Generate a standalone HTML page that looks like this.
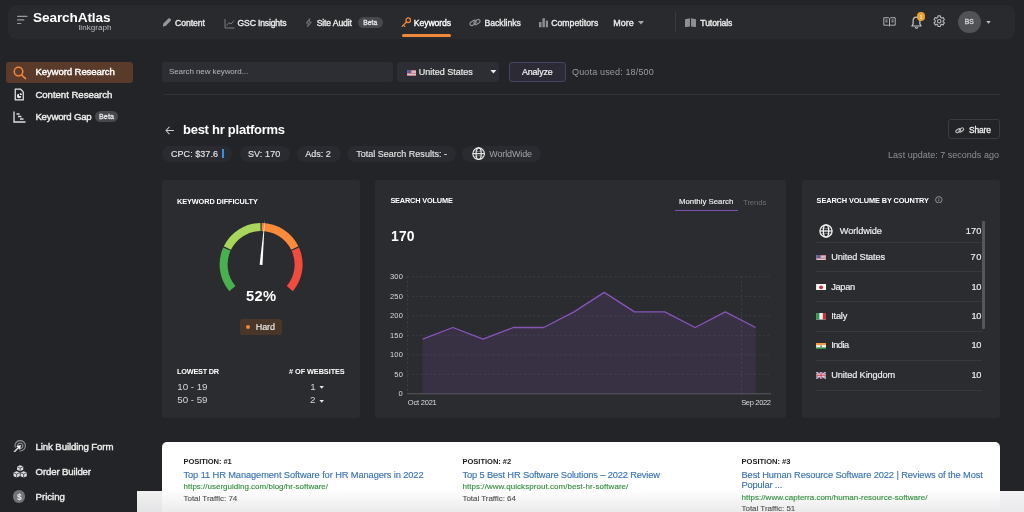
<!DOCTYPE html>
<html><head><meta charset="utf-8">
<style>
*{box-sizing:border-box;margin:0;padding:0}
html,body{width:1024px;height:512px;overflow:hidden;background:#232427;font-family:"Liberation Sans",sans-serif;color:#fff}
.abs{position:absolute}
.t{position:absolute;white-space:nowrap;line-height:1}
.chip{position:absolute;top:145.5px;height:16px;background:#2a2b30;border-radius:8px}
.card{position:absolute;top:180px;height:237.5px;background:#2b2c30;border-radius:3px}
</style></head><body>
<div class="abs" style="left:8px;top:5px;width:1007px;height:33.5px;background:#292a2e;border-radius:8px"></div>

<!-- hamburger -->
<svg class="abs" style="left:17px;top:15px" width="11" height="10" viewBox="0 0 11 10"><g stroke="#9a9b9f" stroke-width="1.2" stroke-linecap="round"><path d="M0.6 1.3h9.4M0.6 4.9h6.2M0.6 8.5h3.2"/></g></svg>

<!-- nav icons -->
<svg class="abs" style="left:161.6px;top:17.3px" width="9.6" height="10.8" viewBox="0 0 11 11"><path d="M.8 10.3l.8-3.4L7.4 1a1.2 1.2 0 0 1 1.7 0l.9.9a1.2 1.2 0 0 1 0 1.7L4.2 9.5z" fill="#97989c"/></svg>
<svg class="abs" style="left:223.5px;top:17.5px" width="11" height="11" viewBox="0 0 11 11"><path d="M1 1v9h9.5" stroke="#7c7d81" fill="none" stroke-width="1"/><path d="M2.5 7.5l2.5-3 2 1.5 3-3.5" stroke="#7c7d81" fill="none" stroke-width="1"/></svg>
<svg class="abs" style="left:304.8px;top:18px" width="7.6" height="9.3" viewBox="0 0 9 11"><path d="M5.5 .8L1.5 6h2.6L3.2 10.2 7.5 4.8H4.8z" stroke="#808185" fill="none" stroke-width="1.1" stroke-linejoin="round"/></svg>
<div class="abs" style="left:358px;top:17px;width:25px;height:11px;border-radius:6px;background:#47484d"></div>
<svg class="abs" style="left:400.5px;top:17px" width="10.5" height="10.5" viewBox="0 0 11 11"><circle cx="7.6" cy="3.4" r="2.4" stroke="#f0883a" fill="none" stroke-width="1.4"/><path d="M5.8 5.2L1.2 9.8M2.6 8.4l1.4 1.4" stroke="#f0883a" fill="none" stroke-width="1.4" stroke-linecap="round"/></svg>
<div class="abs" style="left:402px;top:34.4px;width:49px;height:2.8px;background:#f0883a;border-radius:1.5px"></div>
<svg class="abs" style="left:469px;top:17px" width="12" height="11" viewBox="0 0 12 11"><g stroke="#8e8f93" fill="none" stroke-width="1.2"><rect x="0.8" y="4.2" width="6.5" height="3.6" rx="1.8" transform="rotate(-35 4 6)"/><rect x="4.7" y="3.2" width="6.5" height="3.6" rx="1.8" transform="rotate(-35 8 5)"/></g></svg>
<svg class="abs" style="left:538.5px;top:17px" width="9.5" height="11" viewBox="0 0 10 11"><g fill="#8e8f93"><rect x="0" y="5" width="2.6" height="5.5"/><rect x="3.6" y="1" width="2.6" height="9.5"/><rect x="7.2" y="3.5" width="2.6" height="7"/></g></svg>
<svg class="abs" style="left:638px;top:21px" width="6" height="4" viewBox="0 0 6 4"><path d="M0 0h6L3 3.5z" fill="#a5a6aa"/></svg>
<div class="abs" style="left:675px;top:12px;width:1px;height:20px;background:#3a3b40"></div>
<svg class="abs" style="left:684.8px;top:17.5px" width="11" height="9.5" viewBox="0 0 12 10"><path d="M0 1.2L5.4 .2v9L0 9.8zM6.6 .2L12 1.2v8.6L6.6 9.2z" fill="#8e8f93"/></svg>

<!-- right icons -->
<svg class="abs" style="left:882.6px;top:16.8px" width="13" height="9.8" viewBox="0 0 14 11"><g stroke="#b2b3b7" fill="none" stroke-width="1.1"><path d="M.6 .8h5.2l1.2.9 1.2-.9h5.2v8.4H8.2l-1.2.9-1.2-.9H.6z"/><path d="M7 1.7v8.4M2.4 3.4h2.4M2.4 5.4h2.4M9.2 3.4h2.4M9.2 5.4h2.4"/></g></svg>
<svg class="abs" style="left:910.5px;top:16px" width="11" height="13" viewBox="0 0 11 13"><path d="M5.5 1.2c-2.2 0-3.4 1.7-3.4 3.8v3L.9 10h9.2L8.9 8V5c0-2.1-1.2-3.8-3.4-3.8zM4.2 11.3a1.4 1.4 0 0 0 2.6 0" stroke="#c6c7ca" fill="none" stroke-width="1.2" stroke-linejoin="round"/></svg>
<div class="abs" style="left:916.8px;top:12.3px;width:8.6px;height:8.6px;border-radius:5px;background:#f0a030"></div>
<svg class="abs" style="left:932.4px;top:14.3px" width="14.4" height="14.4" viewBox="0 0 24 24"><path d="M19.4 13a7.6 7.6 0 0 0 0-2l2.1-1.6-2-3.5-2.5 1a7.6 7.6 0 0 0-1.7-1L14.9 3.2h-4L10.5 5.9a7.6 7.6 0 0 0-1.7 1l-2.5-1-2 3.5L6.4 11a7.6 7.6 0 0 0 0 2l-2.1 1.6 2 3.5 2.5-1a7.6 7.6 0 0 0 1.7 1l.4 2.7h4l.4-2.7a7.6 7.6 0 0 0 1.7-1l2.5 1 2-3.5z" transform="translate(-0.9 0)" stroke="#b4b5b9" fill="none" stroke-width="1.9" stroke-linejoin="round"/><circle cx="12" cy="12" r="2.9" stroke="#b4b5b9" fill="none" stroke-width="1.9"/></svg>
<div class="abs" style="left:958px;top:10.6px;width:22.6px;height:22.6px;border-radius:12px;background:#505256"></div>
<svg class="abs" style="left:985.6px;top:20.5px" width="5" height="3" viewBox="0 0 6 4"><path d="M0 0h6L3 3.5z" fill="#c0c0c0"/></svg>

<!-- sidebar -->
<div class="abs" style="left:6px;top:62px;width:127px;height:21.4px;background:#5a3b2b;border-radius:3px"></div>
<svg class="abs" style="left:12.5px;top:66px" width="14" height="14" viewBox="0 0 14 14"><circle cx="5.5" cy="5.6" r="4.3" stroke="#f0883a" fill="none" stroke-width="1.5"/><path d="M8.7 9l3.8 3.6" stroke="#f0883a" stroke-width="1.5" stroke-linecap="round"/></svg>
<svg class="abs" style="left:14.3px;top:88px" width="10.5" height="13" viewBox="0 0 11 13"><path d="M1.3 .8h5.4L9.7 3.8v8.4H1.3z" stroke="#e6e6e8" fill="none" stroke-width="1.3" stroke-linejoin="round"/><path d="M5.3 5.7a2.3 2.3 0 1 0 2.3 2.3H5.3z" fill="#e6e6e8"/><path d="M6.2 4.9v2.2h2.2a2.2 2.2 0 0 0-2.2-2.2z" fill="#e6e6e8"/></svg>
<svg class="abs" style="left:12.8px;top:110.5px" width="13" height="12" viewBox="0 0 13 12"><path d="M1 .6v10.4h11.5" stroke="#e0e0e0" fill="none" stroke-width="1.3"/><path d="M3.5 3h3M5 5.5h3.5M7 8h3.5" stroke="#e0e0e0" stroke-width="1.3"/></svg>
<div class="abs" style="left:95px;top:110.6px;width:23px;height:11.4px;border-radius:6px;background:#47484d"></div>

<svg class="abs" style="left:12.8px;top:440.4px" width="13" height="13" viewBox="0 0 13 13"><g stroke="#8f9094" fill="none" stroke-width="1.15" stroke-linecap="round"><path d="M2.2 7.2A5.2 5.2 0 1 1 7 11"/><path d="M4.6 6.5A2.7 2.7 0 1 1 7.2 8.5"/></g><path d="M7.7 5.3L3.7 6.3 4.9 7.5 1 11.4 1.7 12.1 5.6 8.2 6.8 9.4z" fill="#f2f2f2" stroke="#f2f2f2" stroke-width=".5" stroke-linejoin="round"/></svg>
<svg class="abs" style="left:13px;top:464.6px" width="14.3" height="13" viewBox="0 0 14 13"><g fill="#dedee1"><path d="M7 .2l3.1 1.4v3.2L7 6.2 3.9 4.8V1.6z"/><path d="M3.5 6.2l3.1 1.4v3.6l-3.1 1.4-3.1-1.4V7.6z"/><path d="M10.5 6.2l3.1 1.4v3.6l-3.1 1.4-3.1-1.4V7.6z"/></g><g stroke="#232427" stroke-width=".7" fill="none"><path d="M4 1.7l3 1.4 3-1.4M7 3.1v3M.5 7.7l3 1.4 3-1.4M3.5 9.1v3.4M7.5 7.7l3 1.4 3-1.4M10.5 9.1v3.4"/></g></svg>
<div class="abs" style="left:13.3px;top:490.4px;width:12.2px;height:12.2px;border-radius:7px;background:#737478"></div>

<!-- search row -->
<div class="abs" style="left:162.2px;top:62px;width:230.5px;height:19.6px;background:#2d2e33;border-radius:3px"></div>
<div class="abs" style="left:397px;top:62px;width:101.6px;height:19.6px;background:#2d2e33;border-radius:3px"></div>
<svg class="abs" style="left:406.5px;top:70px" width="9.6" height="5.6" viewBox="0 0 10 6"><rect width="10" height="6" fill="#e4e0e6"/><g fill="#cf6f80"><rect y="0" width="10" height=".9"/><rect y="1.7" width="10" height=".9"/><rect y="3.4" width="10" height=".9"/><rect y="5.1" width="10" height=".9"/></g><rect width="4.5" height="3.3" fill="#5a5f96"/></svg>
<svg class="abs" style="left:490px;top:70px" width="6.8" height="4" viewBox="0 0 6 4"><path d="M0 0h6L3 3.6z" fill="#ececec"/></svg>
<div class="abs" style="left:508.8px;top:62px;width:57.4px;height:19.6px;background:#2b2a35;border:1px solid #4a4169;border-radius:3px"></div>
<div class="abs" style="left:163px;top:94px;width:837px;height:1px;background:#313237"></div>

<!-- title row -->
<svg class="abs" style="left:165px;top:125.5px" width="9.5" height="9" viewBox="0 0 10 9"><path d="M9 4.5H1.2M4.4 1L1 4.5 4.4 8" stroke="#c8c8c8" fill="none" stroke-width="1.1" stroke-linecap="round" stroke-linejoin="round"/></svg>
<div class="abs" style="left:947.5px;top:119px;width:52px;height:19.6px;border:1px solid #3a3b40;border-radius:3px"></div>
<svg class="abs" style="left:955px;top:125.5px" width="9.5" height="8.7" viewBox="0 0 12 11"><g stroke="#c0c0c0" fill="none" stroke-width="1.3"><rect x="0.8" y="4.2" width="6.5" height="3.6" rx="1.8" transform="rotate(-35 4 6)"/><rect x="4.7" y="3.2" width="6.5" height="3.6" rx="1.8" transform="rotate(-35 8 5)"/></g></svg>

<div class="chip" style="left:162px;width:70px"></div>
<div class="abs" style="left:221.5px;top:149px;width:2px;height:9px;background:#3b8fe0"></div>
<div class="chip" style="left:239.5px;width:50.5px"></div>
<div class="chip" style="left:296.5px;width:44px"></div>
<div class="chip" style="left:347px;width:108.5px"></div>
<div class="chip" style="left:461.8px;width:79px"></div>
<svg class="abs" style="left:471.7px;top:147px" width="13.3" height="13.3" viewBox="0 0 14 14"><g stroke="#ececec" fill="none" stroke-width="1.2"><circle cx="7" cy="7" r="6.1"/><ellipse cx="7" cy="7" rx="2.7" ry="6.1"/><path d="M.9 7h12.2"/><path d="M2 3.9q5 1.800 10 0M2 10.1q5-1.800 10 0" stroke-width=".7" opacity=".6"/></g></svg>

<!-- card 1 -->
<div class="card" style="left:161.7px;width:198.6px"></div>
<svg class="abs" style="left:211px;top:214px" width="100" height="90" viewBox="211 214 100 90">
<g fill="none" stroke-width="8"><path d="M232.37 288.60A37.5 37.5 0 0 1 226.87 249.19" stroke="#48b04e"/><path d="M227.37 248.12A37.5 37.5 0 0 1 260.51 227.00" stroke="#a8d65c"/><path d="M261.69 227.00A37.5 37.5 0 0 1 294.83 248.12" stroke="#fb8b3a"/><path d="M295.33 249.19A37.5 37.5 0 0 1 289.83 288.60" stroke="#ef4b3f"/></g>
<path d="M259.6 264.8L264.8 219.3 262.5 265z" fill="#fff"/>
</svg>
<div class="abs" style="left:240.4px;top:318.8px;width:42px;height:16.2px;background:#4a3629;border-radius:3px"></div>
<div class="abs" style="left:246.3px;top:325px;width:3.8px;height:3.8px;border-radius:2px;background:#f0883a"></div>
<svg class="abs" style="left:319.2px;top:386px" width="5.4" height="3" viewBox="0 0 6 4"><path d="M0 0h6L3 3.6z" fill="#e8e8e8"/></svg>
<svg class="abs" style="left:319.2px;top:399.5px" width="5.4" height="3" viewBox="0 0 6 4"><path d="M0 0h6L3 3.6z" fill="#e8e8e8"/></svg>

<!-- card 2 -->
<div class="card" style="left:374.7px;width:411.5px"></div>
<div class="abs" style="left:674.5px;top:209.6px;width:63.7px;height:1.4px;background:#7f4fad"></div>
<svg class="abs" style="left:380px;top:268px" width="400" height="145" viewBox="380 268 400 145">
<g stroke="#404146" stroke-width="0.7" stroke-dasharray="2.5 2">
<path d="M407 276.8H771M407 296.3H771M407 315.8H771M407 335.3H771M407 354.8H771M407 374.3H771"/>
<path d="M407.5 276V393M741.5 276V398"/>
</g>
<path d="M407 393.8H771" stroke="#5a5b60" stroke-width="1"/>
<path d="M422.6 339.2L452.9 327.5L483.1 339.2L513.4 327.5L543.7 327.5L574.0 311.9L604.2 292.4L634.5 311.9L664.8 311.9L695.1 327.5L725.3 311.9L755.6 327.5L755.6 393.8L422.6 393.8z" fill="rgba(127,79,173,0.170)"/>
<path d="M422.6 339.2L452.9 327.5L483.1 339.2L513.4 327.5L543.7 327.5L574.0 311.9L604.2 292.4L634.5 311.9L664.8 311.9L695.1 327.5L725.3 311.9L755.6 327.5" fill="none" stroke="#8755ba" stroke-width="1.3" stroke-linejoin="round"/>
</svg>

<!-- card 3 -->
<div class="card" style="left:801.7px;width:198.3px"></div>
<svg class="abs" style="left:935.4px;top:195.6px" width="7.6" height="7.6" viewBox="0 0 8 8"><circle cx="4" cy="4" r="3.4" stroke="#b0b0b0" fill="none" stroke-width=".8"/><path d="M4 3.6v2.2M4 2.2v.8" stroke="#b0b0b0" stroke-width=".8"/></svg>
<svg class="abs" style="left:818.5px;top:224.2px" width="14" height="14" viewBox="0 0 14 14"><g stroke="#f4f4f4" fill="none" stroke-width="1.25"><circle cx="7" cy="7" r="6.1"/><ellipse cx="7" cy="7" rx="2.7" ry="6.1"/><path d="M.9 7h12.2"/><path d="M2 3.9q5 1.800 10 0M2 10.1q5-1.800 10 0" stroke-width=".7" opacity=".6"/></g></svg>
<svg class="abs" style="left:816px;top:254.75px" width="10.2" height="5.7" viewBox="0 0 10 6"><rect width="10" height="6" fill="#e4e0e6"/><g fill="#cf6f80"><rect y="0" width="10" height=".9"/><rect y="1.7" width="10" height=".9"/><rect y="3.4" width="10" height=".9"/><rect y="5.1" width="10" height=".9"/></g><rect width="4.5" height="3.3" fill="#5a5f96"/></svg>
<svg class="abs" style="left:816px;top:283.9px" width="10.2" height="6.6" viewBox="0 0 10 6.6"><rect width="10" height="6.6" fill="#f6f6f6"/><circle cx="5" cy="3.3" r="1.9" fill="#c8283c"/></svg>
<svg class="abs" style="left:816px;top:313.3px" width="10.2" height="6.6" viewBox="0 0 10 6.6"><rect width="10" height="6.6" fill="#f4f4f4"/><rect width="3.3" height="6.6" fill="#2f9a50"/><rect x="6.7" width="3.3" height="6.6" fill="#d0303c"/></svg>
<svg class="abs" style="left:816px;top:342.7px" width="10.2" height="6.6" viewBox="0 0 10 6.6"><rect width="10" height="6.6" fill="#f4f4f4"/><rect width="10" height="2.2" fill="#f09a3a"/><rect y="4.4" width="10" height="2.2" fill="#2f8a3a"/><circle cx="5" cy="3.3" r=".8" fill="#33408a"/></svg>
<svg class="abs" style="left:816px;top:372.3px" width="10.2" height="6.6" viewBox="0 0 10 6.6"><rect width="10" height="6.6" fill="#3a4a8a"/><path d="M0 0L10 6.6M10 0L0 6.6" stroke="#f0f0f0" stroke-width="1.3"/><path d="M0 0L10 6.6M10 0L0 6.6" stroke="#c8384a" stroke-width=".5"/><path d="M5 0V6.6M0 3.3H10" stroke="#f0f0f0" stroke-width="2.2"/><path d="M5 0V6.6M0 3.3H10" stroke="#c8384a" stroke-width="1.1"/></svg>
<div class="abs" style="left:816px;top:241.6px;width:166px;height:1px;background:#37383d"></div>
<div class="abs" style="left:816px;top:271px;width:166px;height:1px;background:#37383d"></div>
<div class="abs" style="left:816px;top:301.2px;width:166px;height:1px;background:#37383d"></div>
<div class="abs" style="left:816px;top:330.6px;width:166px;height:1px;background:#37383d"></div>
<div class="abs" style="left:816px;top:360px;width:166px;height:1px;background:#37383d"></div>
<div class="abs" style="left:816px;top:389.6px;width:166px;height:1px;background:#37383d"></div>
<div class="abs" style="left:982.2px;top:220.5px;width:2.6px;height:108px;background:#56575c;border-radius:1px"></div>

<!-- results -->
<div class="abs" style="left:161.7px;top:442px;width:838.3px;height:80px;background:#fff;border-radius:5px"></div>
<div class="abs" style="left:137px;top:491px;width:25px;height:21px;background:linear-gradient(to bottom,#f1f1f2,#e4e4e6)"></div>
<div class="abs" style="left:1000px;top:491px;width:24px;height:21px;background:linear-gradient(to bottom,#f1f1f3,#eaeaec)"></div>
<div class="abs" style="left:161.7px;top:489px;width:838.3px;height:23px;background:linear-gradient(to bottom,#fff,#ebebec)"></div>

<div style="position:absolute;left:0;top:0;width:1024px;height:512px;will-change:transform">
<div class="t" style="left:33px;top:11px;font-size:13.64px;color:#fff;letter-spacing:-0.12px;font-weight:bold">SearchAtlas</div>
<div class="t" style="left:78.5px;top:24px;font-size:8px;color:#bdbec1;letter-spacing:0.06px">linkgraph</div>
<div class="t" style="left:175px;top:19px;font-size:8.65px;color:#ececec;letter-spacing:-0.05px;-webkit-text-stroke:0.35px #ececec">Content</div>
<div class="t" style="left:237.5px;top:19px;font-size:8.65px;color:#ececec;letter-spacing:-0.16px;-webkit-text-stroke:0.35px #ececec">GSC Insights</div>
<div class="t" style="left:316.7px;top:19px;font-size:8.65px;color:#ececec;letter-spacing:-0.14px;-webkit-text-stroke:0.35px #ececec">Site Audit</div>
<div class="t" style="left:413.8px;top:19px;font-size:8.65px;color:#fff;letter-spacing:-0.08px;-webkit-text-stroke:0.35px #fff">Keywords</div>
<div class="t" style="left:484.5px;top:19px;font-size:8.65px;color:#ececec;letter-spacing:-0.01px;-webkit-text-stroke:0.35px #ececec">Backlinks</div>
<div class="t" style="left:551.2px;top:19px;font-size:8.65px;color:#ececec;letter-spacing:0.06px;-webkit-text-stroke:0.35px #ececec">Competitors</div>
<div class="t" style="left:700.3px;top:19px;font-size:8.65px;color:#ececec;letter-spacing:-0.09px;-webkit-text-stroke:0.35px #ececec">Tutorials</div>
<div class="t" style="left:613.2px;top:19px;font-size:8.98px;color:#ececec;letter-spacing:0.05px;-webkit-text-stroke:0.35px #ececec">More</div>
<div class="t" style="left:363.2px;top:20px;font-size:6.76px;color:#e4e4e4;letter-spacing:0.06px;-webkit-text-stroke:0.3px #e4e4e4">Beta</div>
<div class="t" style="left:964.8px;top:19px;font-size:6.8px;color:#d4d4d6;letter-spacing:-0.13px;-webkit-text-stroke:0.3px #d4d4d6">BS</div>
<div class="t" style="left:919.7px;top:16px;font-size:4.5px;color:#fff;font-weight:bold">1</div>
<div class="t" style="left:35.4px;top:67px;font-size:9.65px;color:#fff;letter-spacing:-0.12px;-webkit-text-stroke:0.4px #fff">Keyword Research</div>
<div class="t" style="left:35.4px;top:90px;font-size:9.65px;color:#ececec;letter-spacing:-0.04px;-webkit-text-stroke:0.4px #ececec">Content Research</div>
<div class="t" style="left:35.4px;top:112px;font-size:9.65px;color:#ececec;letter-spacing:-0.2px;-webkit-text-stroke:0.4px #ececec">Keyword Gap</div>
<div class="t" style="left:98.9px;top:114px;font-size:7.13px;color:#e4e4e4;letter-spacing:0.14px;-webkit-text-stroke:0.3px #e4e4e4">Beta</div>
<div class="t" style="left:35.6px;top:442px;font-size:9.65px;color:#ececec;letter-spacing:-0.11px;-webkit-text-stroke:0.4px #ececec">Link Building Form</div>
<div class="t" style="left:35.6px;top:467px;font-size:9.65px;color:#ececec;letter-spacing:-0.15px;-webkit-text-stroke:0.4px #ececec">Order Builder</div>
<div class="t" style="left:35.6px;top:492px;font-size:9.65px;color:#ececec;letter-spacing:-0.03px;-webkit-text-stroke:0.4px #ececec">Pricing</div>
<div class="t" style="left:16.9px;top:493px;font-size:8.5px;color:#ececec;font-weight:bold">$</div>
<div class="t" style="left:169px;top:68px;font-size:8px;color:#b6b7ba;letter-spacing:-0.09px">Search new keyword...</div>
<div class="t" style="left:418.8px;top:68px;font-size:9px;color:#e8e8e8;letter-spacing:-0.01px;-webkit-text-stroke:0.2px #e8e8e8">United States</div>
<div class="t" style="left:521.9px;top:68px;font-size:8.88px;color:#f2f2f2;letter-spacing:-0.12px;-webkit-text-stroke:0.2px #f2f2f2">Analyze</div>
<div class="t" style="left:572px;top:68px;font-size:9px;color:#9a9b9e;letter-spacing:0.16px">Quota used: 18/500</div>
<div class="t" style="left:183px;top:123px;font-size:13px;color:#fff;letter-spacing:-0.26px;font-weight:bold">best hr platforms</div>
<div class="t" style="left:968.9px;top:126px;font-size:8.43px;color:#f0f0f0;letter-spacing:-0.12px;-webkit-text-stroke:0.3px #f0f0f0">Share</div>
<div class="t" style="left:171px;top:150px;font-size:9px;color:#e2e2e4;letter-spacing:0.05px;-webkit-text-stroke:0.15px #e2e2e4">CPC: $37.6</div>
<div class="t" style="left:248px;top:150px;font-size:9px;color:#e2e2e4;letter-spacing:0.09px;-webkit-text-stroke:0.15px #e2e2e4">SV: 170</div>
<div class="t" style="left:305.2px;top:150px;font-size:9px;color:#e2e2e4;letter-spacing:0.02px;-webkit-text-stroke:0.15px #e2e2e4">Ads: 2</div>
<div class="t" style="left:356.2px;top:150px;font-size:9px;color:#e2e2e4;letter-spacing:0.01px;-webkit-text-stroke:0.15px #e2e2e4">Total Search Results: -</div>
<div class="t" style="left:489.2px;top:150px;font-size:8.98px;color:#a2a3a6;letter-spacing:-0.11px">WorldWide</div>
<div class="t" style="left:888.1px;top:151px;font-size:9px;color:#8f9093;letter-spacing:0.01px">Last update: 7 seconds ago</div>
<div class="t" style="left:177px;top:198px;font-size:7.35px;color:#fff;letter-spacing:-0.11px;font-weight:bold">KEYWORD DIFFICULTY</div>
<div class="t" style="left:246px;top:289px;font-size:14.72px;color:#fff;letter-spacing:0.31px;font-weight:bold">52%</div>
<div class="t" style="left:255.8px;top:323px;font-size:8.98px;color:#ececec;letter-spacing:-0.12px;-webkit-text-stroke:0.15px #ececec">Hard</div>
<div class="t" style="left:177.1px;top:368px;font-size:7.35px;color:#fff;letter-spacing:-0.26px;font-weight:bold">LOWEST DR</div>
<div class="t" style="left:289.1px;top:368px;font-size:7.35px;color:#fff;letter-spacing:-0.09px;font-weight:bold"># OF WEBSITES</div>
<div class="t" style="left:177.3px;top:382px;font-size:9.8px;color:#d6d6d8;letter-spacing:-0.04px">10 - 19</div>
<div class="t" style="left:177.3px;top:395px;font-size:9.8px;color:#d6d6d8;letter-spacing:-0.04px">50 - 59</div>
<div class="t" style="left:310.35px;top:382px;font-size:9.8px;color:#d6d6d8">1</div>
<div class="t" style="left:310.1px;top:395px;font-size:9.8px;color:#d6d6d8">2</div>
<div class="t" style="left:390.4px;top:197px;font-size:7.35px;color:#fff;letter-spacing:-0.17px;font-weight:bold">SEARCH VOLUME</div>
<div class="t" style="left:391px;top:230px;font-size:13.87px;color:#fff;letter-spacing:0.19px;font-weight:bold">170</div>
<div class="t" style="left:679px;top:198px;font-size:7.8px;color:#f0f0f0;letter-spacing:0.01px;-webkit-text-stroke:0.15px #f0f0f0">Monthly Search</div>
<div class="t" style="left:743.1px;top:199px;font-size:7.74px;color:#6c6d71;letter-spacing:-0.12px">Trends</div>
<div class="t" style="left:390px;top:273px;font-size:7.5px;color:#dcdcde;letter-spacing:0.18px">300</div>
<div class="t" style="left:390px;top:293px;font-size:7.5px;color:#dcdcde;letter-spacing:0.18px">250</div>
<div class="t" style="left:390px;top:312px;font-size:7.5px;color:#dcdcde;letter-spacing:0.18px">200</div>
<div class="t" style="left:390px;top:332px;font-size:7.5px;color:#dcdcde;letter-spacing:0.18px">150</div>
<div class="t" style="left:390px;top:351px;font-size:7.5px;color:#dcdcde;letter-spacing:0.18px">100</div>
<div class="t" style="left:394.2px;top:371px;font-size:7.5px;color:#dcdcde;letter-spacing:0.33px">50</div>
<div class="t" style="left:398.6px;top:390px;font-size:7.5px;color:#dcdcde">0</div>
<div class="t" style="left:407.8px;top:399px;font-size:7.5px;color:#dcdcde;letter-spacing:-0.21px">Oct 2021</div>
<div class="t" style="left:741.2px;top:399px;font-size:7.5px;color:#dcdcde;letter-spacing:-0.33px">Sep 2022</div>
<div class="t" style="left:816.6px;top:197px;font-size:7.35px;color:#fff;letter-spacing:-0.1px;font-weight:bold">SEARCH VOLUME BY COUNTRY</div>
<div class="t" style="left:839.8px;top:227px;font-size:9.2px;color:#ececee;letter-spacing:-0.09px;-webkit-text-stroke:0.2px #ececee">Worldwide</div>
<div class="t" style="left:965.8px;top:227px;font-size:9.2px;color:#ececee;letter-spacing:0.09px;-webkit-text-stroke:0.2px #ececee">170</div>
<div class="t" style="left:831.2px;top:253px;font-size:9.2px;color:#ececee;letter-spacing:-0.1px;-webkit-text-stroke:0.2px #ececee">United States</div>
<div class="t" style="left:970.6px;top:253px;font-size:9.2px;color:#ececee;letter-spacing:0.49px;-webkit-text-stroke:0.2px #ececee">70</div>
<div class="t" style="left:831.2px;top:283px;font-size:9.2px;color:#ececee;letter-spacing:-0.28px;-webkit-text-stroke:0.2px #ececee">Japan</div>
<div class="t" style="left:971.5px;top:283px;font-size:9.2px;color:#ececee;letter-spacing:-0.41px;-webkit-text-stroke:0.2px #ececee">10</div>
<div class="t" style="left:831.2px;top:312px;font-size:9.2px;color:#ececee;letter-spacing:-0.19px;-webkit-text-stroke:0.2px #ececee">Italy</div>
<div class="t" style="left:971.5px;top:312px;font-size:9.2px;color:#ececee;letter-spacing:-0.41px;-webkit-text-stroke:0.2px #ececee">10</div>
<div class="t" style="left:831.2px;top:341px;font-size:9.2px;color:#ececee;letter-spacing:-0.5px;-webkit-text-stroke:0.2px #ececee">India</div>
<div class="t" style="left:971.5px;top:341px;font-size:9.2px;color:#ececee;letter-spacing:-0.41px;-webkit-text-stroke:0.2px #ececee">10</div>
<div class="t" style="left:831.2px;top:371px;font-size:9.2px;color:#ececee;letter-spacing:-0.1px;-webkit-text-stroke:0.2px #ececee">United Kingdom</div>
<div class="t" style="left:971.5px;top:371px;font-size:9.2px;color:#ececee;letter-spacing:-0.41px;-webkit-text-stroke:0.2px #ececee">10</div>
<div class="t" style="left:183.5px;top:458px;font-size:7.55px;color:#1c1c1c;letter-spacing:-0.07px;font-weight:bold">POSITION: #1</div>
<div class="t" style="left:183.5px;top:471px;font-size:9.3px;color:#3c74b5;letter-spacing:-0.11px;-webkit-text-stroke:0.15px #3c74b5">Top 11 HR Management Software for HR Managers in 2022</div>
<div class="t" style="left:183.5px;top:483px;font-size:8px;color:#2f8c3c;-webkit-text-stroke:0.12px #2f8c3c">https://userguiding.com/blog/hr-software/</div>
<div class="t" style="left:183.5px;top:495px;font-size:8px;color:#4c4c4c;letter-spacing:-0.02px;-webkit-text-stroke:0.1px #4c4c4c">Total Traffic: 74</div>
<div class="t" style="left:462.5px;top:458px;font-size:7.55px;color:#1c1c1c;letter-spacing:-0.03px;font-weight:bold">POSITION: #2</div>
<div class="t" style="left:462.5px;top:471px;font-size:9.3px;color:#3c74b5;letter-spacing:-0.15px;-webkit-text-stroke:0.15px #3c74b5">Top 5 Best HR Software Solutions – 2022 Review</div>
<div class="t" style="left:462.5px;top:483px;font-size:8px;color:#2f8c3c;letter-spacing:0.05px;-webkit-text-stroke:0.12px #2f8c3c">https://www.quicksprout.com/best-hr-software/</div>
<div class="t" style="left:462.5px;top:495px;font-size:8px;color:#4c4c4c;letter-spacing:-0.04px;-webkit-text-stroke:0.1px #4c4c4c">Total Traffic: 64</div>
<div class="t" style="left:741.5px;top:458px;font-size:7.55px;color:#1c1c1c;letter-spacing:-0.01px;font-weight:bold">POSITION: #3</div>
<div class="t" style="left:741.5px;top:471px;font-size:9.3px;color:#3c74b5;letter-spacing:-0.11px;-webkit-text-stroke:0.15px #3c74b5">Best Human Resource Software 2022 | Reviews of the Most</div>
<div class="t" style="left:741.5px;top:481px;font-size:9.3px;color:#3c74b5;letter-spacing:-0.16px;-webkit-text-stroke:0.15px #3c74b5">Popular ...</div>
<div class="t" style="left:741.5px;top:494px;font-size:8px;color:#2f8c3c;letter-spacing:0.01px;-webkit-text-stroke:0.12px #2f8c3c">https://www.capterra.com/human-resource-software/</div>
<div class="t" style="left:741.5px;top:505px;font-size:8px;color:#4c4c4c;letter-spacing:-0.02px;-webkit-text-stroke:0.1px #4c4c4c">Total Traffic: 51</div>
</div>
</body></html>
